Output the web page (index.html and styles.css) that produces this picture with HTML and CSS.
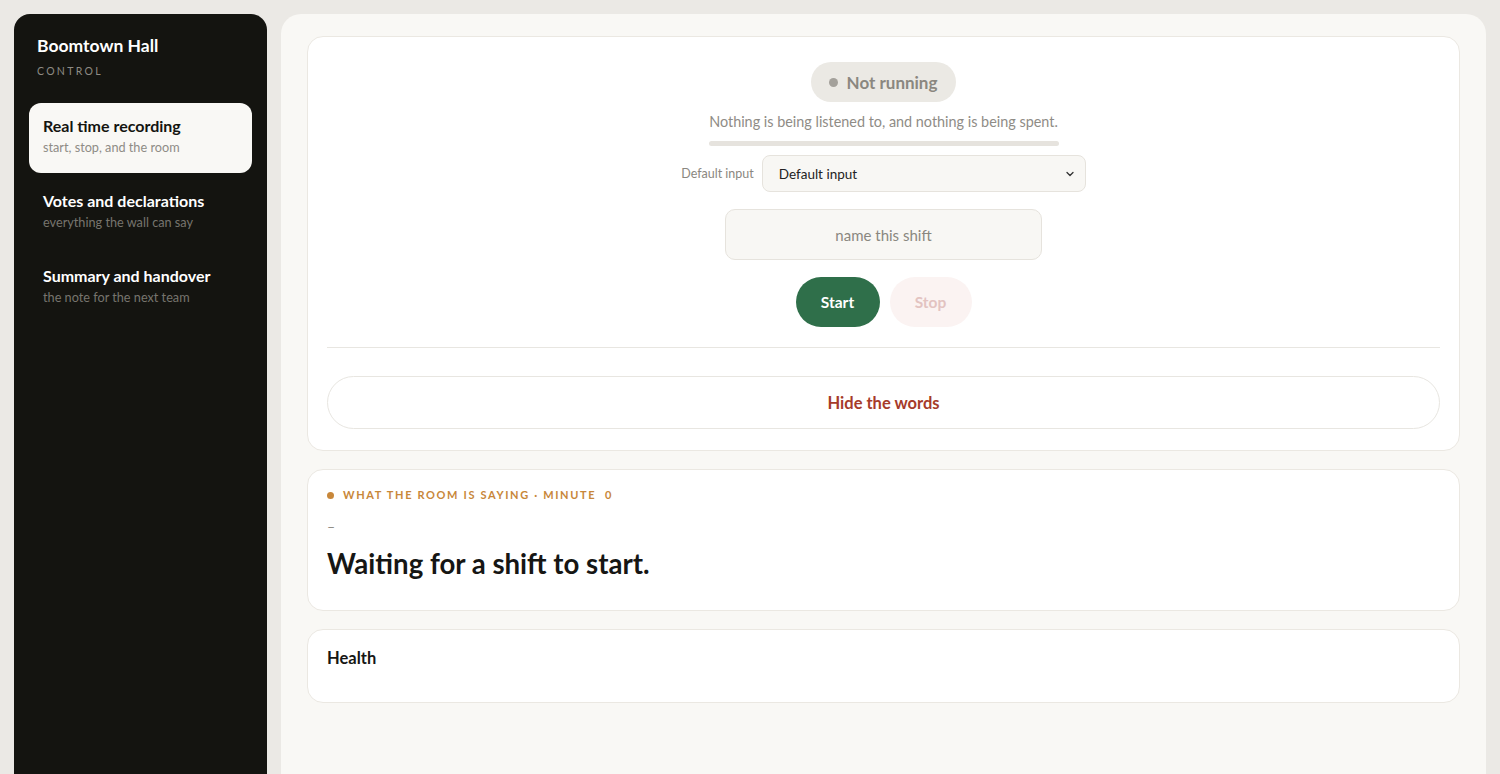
FILE: index.html
```html
<!DOCTYPE html>
<html lang="en">
<head>
<meta charset="utf-8">
<title>Boomtown Hall — Control</title>
<link rel="stylesheet" href="styles.css">
</head>
<body>
<div class="app">
  <aside class="sidebar">
    <div class="brand">
      <div class="brand-name">Boomtown Hall</div>
      <div class="brand-sub">CONTROL</div>
    </div>
    <nav class="nav">
      <a class="nav-item active">
        <span class="nav-title">Real time recording</span>
        <span class="nav-sub">start, stop, and the room</span>
      </a>
      <a class="nav-item">
        <span class="nav-title">Votes and declarations</span>
        <span class="nav-sub">everything the wall can say</span>
      </a>
      <a class="nav-item">
        <span class="nav-title">Summary and handover</span>
        <span class="nav-sub">the note for the next team</span>
      </a>
    </nav>
  </aside>
  <main class="main">
    <section class="card control">
      <div class="status-pill"><span class="dot"></span>Not running</div>
      <p class="status-text">Nothing is being listened to, and nothing is being spent.</p>
      <div class="meter"></div>
      <div class="input-row">
        <label class="input-label">Default input</label>
        <div class="select">
          <span>Default input</span>
          <svg class="chev" width="10" height="10" viewBox="0 0 10 10"><path d="M2 3.5 L5 6.5 L8 3.5" fill="none" stroke="#333" stroke-width="1.3" stroke-linecap="round" stroke-linejoin="round"/></svg>
        </div>
      </div>
      <div class="shift-name">name this shift</div>
      <div class="actions">
        <button class="btn start">Start</button>
        <button class="btn stop">Stop</button>
      </div>
      <hr class="divider">
      <button class="hide-btn">Hide the words</button>
    </section>
    <section class="card room">
      <div class="eyebrow"><span class="edot"></span>WHAT THE ROOM IS SAYING · MINUTE&nbsp;&nbsp;0</div>
      <div class="dash">–</div>
      <h1 class="waiting">Waiting for a shift to start.</h1>
    </section>
    <section class="card health">
      <h2 class="health-title">Health</h2>
    </section>
  </main>
</div>
</body>
</html>
```
FILE: styles.css
```css
* { box-sizing: border-box; }
html, body { margin: 0; padding: 0; }
body {
  background: #ebe9e5;
  font-family: "Lato", "Noto Sans", sans-serif;
  color: #161614;
  height: 774px;
  overflow: hidden;
}
.app {
  display: flex;
  gap: 14px;
  padding: 14px 14px 0 14px;
  height: 774px;
}
.sidebar {
  width: 253px;
  flex: none;
  background: #141410;
  border-radius: 16px 16px 0 0;
  padding: 22px 15px;
}
.brand { padding: 0 8px; }
.brand-name {
  color: #fff;
  font-weight: 700;
  font-size: 17.5px;
  line-height: 20px;
}
.brand-sub {
  color: #8e8b84;
  font-size: 10.5px;
  letter-spacing: 2.3px;
  margin-top: 8px;
  line-height: 14px;
}
.nav {
  margin-top: 25px;
  display: flex;
  flex-direction: column;
  gap: 5px;
}
.nav-item {
  display: flex;
  flex-direction: column;
  justify-content: center;
  height: 70px;
  padding: 0 14px 5px;
  border-radius: 12px;
}
.nav-item.active { background: #f9f8f5; }
.nav-title {
  color: #fff;
  font-weight: 700;
  font-size: 16px;
  line-height: 20px;
}
.nav-sub {
  color: #77746e;
  font-size: 12.7px;
  line-height: 16px;
  margin-top: 3px;
}
.nav-item.active .nav-title { color: #141410; }
.nav-item.active .nav-sub { color: #8f8c86; }

.main {
  flex: 1;
  background: #f9f8f5;
  border-radius: 20px 20px 0 0;
  padding: 22px 26px 0;
  display: flex;
  flex-direction: column;
  gap: 18px;
}
.card {
  background: #fff;
  border: 1px solid #ebe8e2;
  border-radius: 16px;
  padding: 0 19px;
  flex: none;
}
.control {
  display: flex;
  flex-direction: column;
  align-items: center;
  padding-top: 25px;
  padding-bottom: 21px;
}
.status-pill {
  height: 40px;
  padding: 0 19px 0 18px;
  border-radius: 20px;
  background: #ebe9e4;
  color: #8a8780;
  font-weight: 700;
  font-size: 17px;
  display: flex;
  align-items: center;
  gap: 9px;
}
.dot {
  width: 9px; height: 9px;
  border-radius: 50%;
  background: #a4a19b;
}
.status-text {
  margin: 11px 0 0;
  color: #8f8c86;
  font-size: 14.4px;
  line-height: 18px;
}
.meter {
  width: 350px;
  height: 5px;
  border-radius: 3px;
  background: #e6e3de;
  margin-top: 10px;
}
.input-row {
  display: flex;
  align-items: center;
  gap: 8px;
  margin-top: 9px;
}
.input-label {
  color: #8a8780;
  font-size: 12.5px;
}
.select {
  width: 324px;
  height: 37px;
  border: 1px solid #e6e3dd;
  border-radius: 8px;
  background: #f8f7f4;
  display: flex;
  align-items: center;
  justify-content: space-between;
  padding: 0 10px 0 16px;
  font-size: 13.5px;
  color: #222;
}
.shift-name {
  margin-top: 17px;
  width: 317px;
  height: 51px;
  border: 1px solid #e6e3dd;
  border-radius: 10px;
  background: #f8f7f4;
  display: flex;
  align-items: center;
  justify-content: center;
  color: #8a8780;
  font-size: 15px;
}
.actions {
  display: flex;
  gap: 10px;
  margin-top: 17px;
}
.btn {
  height: 50px;
  border: none;
  border-radius: 25px;
  font-family: inherit;
  font-weight: 700;
  font-size: 15.5px;
  padding: 0;
}
.btn.start { width: 84px; background: #2f6f4a; color: #fff; }
.btn.stop { width: 82px; background: #fbf3f2; color: #e3c3c1; }
.divider {
  width: 100%;
  border: none;
  border-top: 1px solid #e8e6e1;
  margin: 20px 0 0;
}
.hide-btn {
  margin-top: 28px;
  width: 100%;
  height: 53px;
  border: 1px solid #e8e6e1;
  border-radius: 27px;
  background: #fff;
  color: #a63b2a;
  font-family: inherit;
  font-weight: 700;
  font-size: 16.5px;
}
.room {
  padding-top: 18px;
  padding-bottom: 28px;
}
.eyebrow {
  display: flex;
  align-items: center;
  color: #c8873a;
  font-weight: 700;
  font-size: 11px;
  letter-spacing: 1.65px;
  line-height: 14px;
}
.edot {
  width: 7px; height: 7px;
  border-radius: 50%;
  background: #c8873a;
  margin-right: 9px;
}
.dash {
  color: #8a8780;
  font-size: 14px;
  line-height: 18px;
  margin-top: 16px;
}
.waiting {
  margin: 10px 0 0;
  font-size: 27.6px;
  line-height: 36px;
  font-weight: 700;
  color: #161614;
}
.health {
  height: 74px;
  padding-top: 17px;
}
.health-title {
  margin: 0;
  font-size: 16.5px;
  line-height: 22px;
  font-weight: 700;
}
```
